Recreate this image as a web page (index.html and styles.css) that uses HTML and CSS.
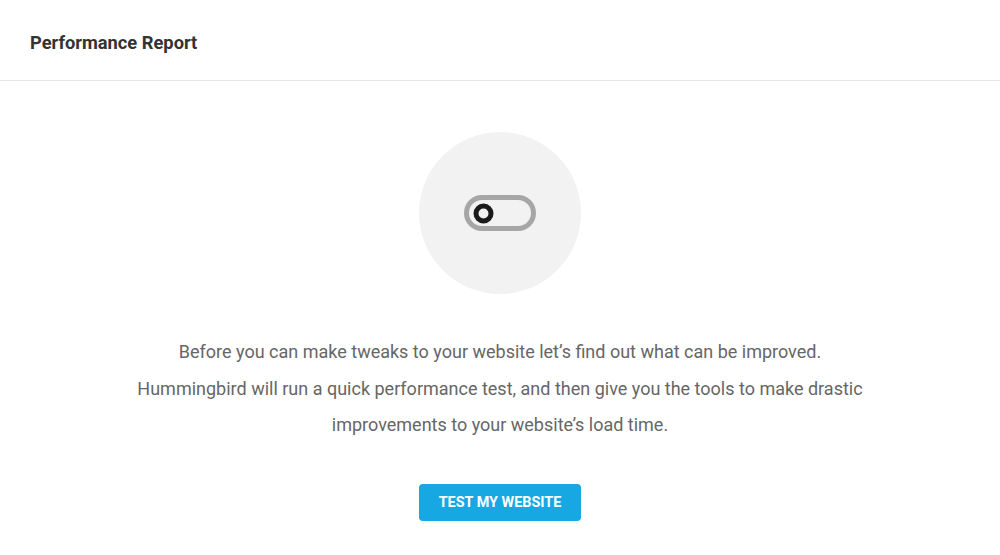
FILE: index.html
```html
<!DOCTYPE html>
<html lang="en">
<head>
<meta charset="utf-8">
<title>Performance Report</title>
<link rel="stylesheet" href="styles.css">
</head>
<body>
<div class="box">
  <header class="box-header">
    <h2 class="box-title">Performance Report</h2>
  </header>
  <section class="box-body">
    <div class="hero">
      <svg class="toggle" width="72" height="36" viewBox="0 0 72 36" aria-hidden="true">
        <rect x="2.5" y="2.5" width="67" height="31" rx="15.5" fill="none" stroke="#a6a6a6" stroke-width="5"/>
        <circle cx="19.5" cy="18.5" r="7.5" fill="#f2f2f2" stroke="#1a1a1a" stroke-width="5"/>
      </svg>
    </div>
    <p class="desc">Before you can make tweaks to your website let’s find out what can be improved.</p>
    <p class="desc desc-wide">Hummingbird will run a quick performance test, and then give you the tools to make drastic improvements to your website’s load time.</p>
    <button class="btn" type="button">TEST MY WEBSITE</button>
  </section>
</div>
</body>
</html>
```
FILE: styles.css
```css
html, body {
  margin: 0;
  padding: 0;
  background: #ffffff;
  font-family: Roboto, "Liberation Sans", Arial, sans-serif;
}

.box {
  width: 1000px;
}

.box-header {
  height: 80px;
  border-bottom: 1px solid #e6e6e6;
  display: flex;
  align-items: center;
  padding: 0 30px;
  box-sizing: content-box;
}

.box-title {
  margin: 4px 0 0;
  font-size: 18.3px;
  font-weight: 700;
  color: #333333;
}

.box-body {
  display: flex;
  flex-direction: column;
  align-items: center;
  padding-top: 51px;
}

.hero {
  width: 162px;
  height: 162px;
  border-radius: 50%;
  background: #f2f2f2;
  display: flex;
  align-items: center;
  justify-content: center;
  margin-bottom: 40px;
}

.toggle {
  display: block;
}

.desc {
  margin: 0;
  font-size: 18px;
  line-height: 36.5px;
  color: #666666;
  text-align: center;
  max-width: 760px;
}

.desc-wide {
  max-width: 740px;
}

.btn {
  margin-top: 40px;
  height: 37px;
  padding: 0 20px;
  border: none;
  border-radius: 4px;
  background: #17a8e3;
  color: #ffffff;
  font-family: Roboto, "Liberation Sans", Arial, sans-serif;
  font-size: 14.4px;
  font-weight: 700;
  cursor: pointer;
}
```
